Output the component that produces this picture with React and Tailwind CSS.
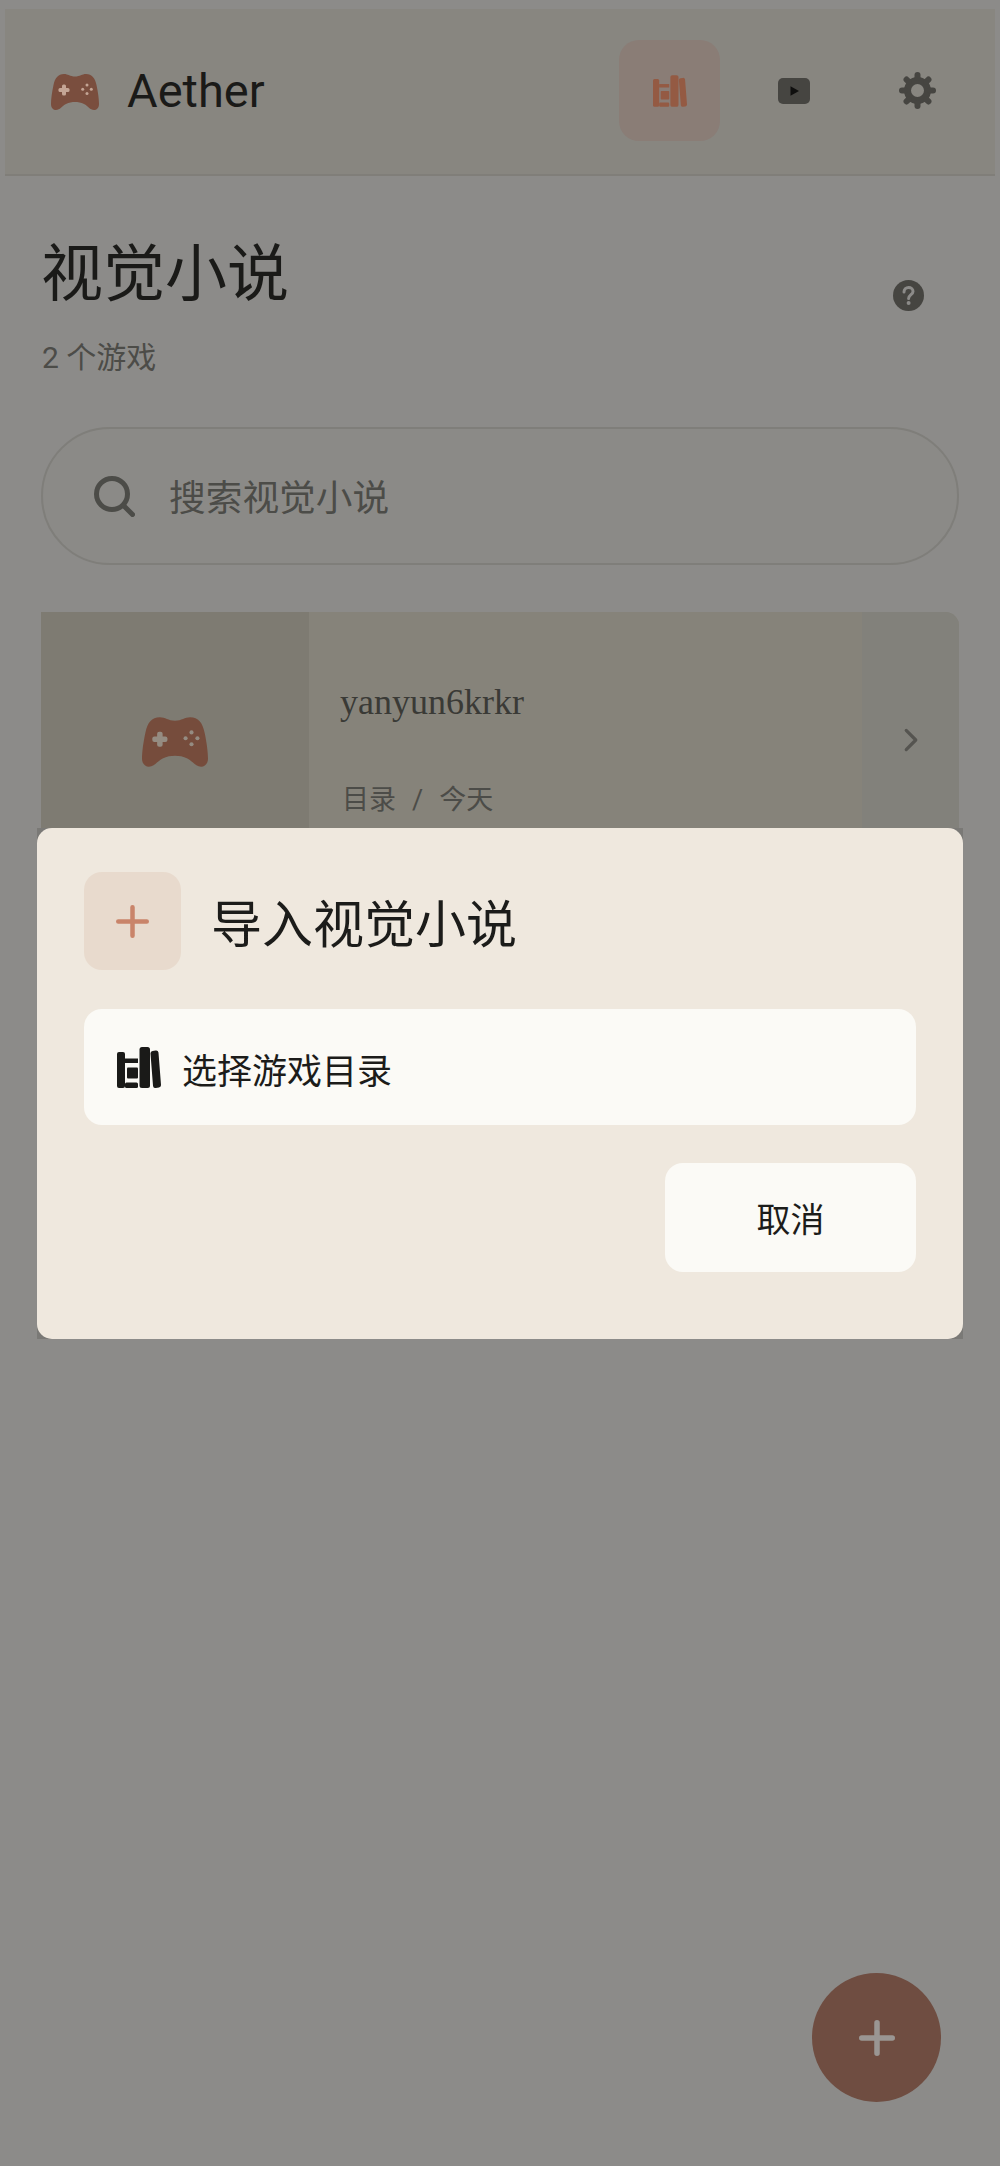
import React from "react";
import { IoChevronForward } from "react-icons/io5";

const sans = "font-['Roboto','Noto_Sans_CJK_SC',sans-serif]";

function Pad({ w, h, className, dot }) {
  return (
    <svg width={w} height={h} viewBox="0 0 48 36" className={className}>
      <path
        fill="currentColor"
        d="M13 0C17 0 19 2.5 24 2.5C29 2.5 31 0 35 0C41 0 44 4 45.5 11C47 18 48 25 48 30C48 34 45.5 36 43 36C39 36 37 32 33 30C30 28.5 27 28 24 28C21 28 18 28.5 15 30C11 32 9 36 5 36C2.5 36 0 34 0 30C0 25 1 18 2.5 11C4 4 7 0 13 0Z"
      />
      <g fill={dot}>
        <rect x="7.5" y="14" width="11" height="4" rx="1.5" />
        <rect x="11" y="10.5" width="4" height="11" rx="1.5" />
        <circle cx="36" cy="11" r="1.5" />
        <circle cx="36" cy="19.6" r="1.5" />
        <circle cx="31.7" cy="15.3" r="1.5" />
        <circle cx="40.3" cy="15.3" r="1.5" />
      </g>
    </svg>
  );
}

function Plus({ size, stroke, className }) {
  const m = size / 2;
  const e = stroke / 2;
  return (
    <svg width={size} height={size} viewBox={`0 0 ${size} ${size}`} className={className}>
      <path d={`M${m} ${e}V${size - e}M${e} ${m}H${size - e}`} stroke="currentColor" strokeWidth={stroke} strokeLinecap="round" fill="none" />
    </svg>
  );
}

function Gear({ className }) {
  const angles = [0, 45, 90, 135, 180, 225, 270, 315];
  return (
    <svg width="37" height="37" viewBox="0 0 37 37" className={className}>
      <circle cx="18.5" cy="18.5" r="10" fill="none" stroke="currentColor" strokeWidth="7" />
      {angles.map((a) => (
        <line key={a} x1="18.5" y1="6" x2="18.5" y2="3" stroke="currentColor" strokeWidth="6" strokeLinecap="round" transform={`rotate(${a} 18.5 18.5)`} />
      ))}
    </svg>
  );
}

function Play() {
  return (
    <svg width="32" height="26" viewBox="0 0 32 26">
      <rect width="32" height="26" rx="5" fill="#464541" />
      <path d="M12.5 8.2L21 13L12.5 17.8Z" fill="#0f0f0e" />
    </svg>
  );
}

function Search() {
  return (
    <svg width="41" height="41" viewBox="0 0 41 41" className="text-[#4c4c48]">
      <circle cx="18" cy="18" r="15.5" fill="none" stroke="currentColor" strokeWidth="5" />
      <path d="M30 30L38.5 38.5" stroke="currentColor" strokeWidth="5" strokeLinecap="round" />
    </svg>
  );
}

function Help() {
  return (
    <svg width="31" height="31" viewBox="0 0 31 31">
      <circle cx="15.5" cy="15.5" r="15.5" fill="#464541" />
      <path d="M11 12C11 9 13.2 7.5 15.6 7.5C18 7.5 20 9 20 11.4C20 14.5 15.6 14.8 15.6 18.5" fill="none" stroke="#8c8b89" strokeWidth="3" strokeLinecap="round" />
      <circle cx="15.6" cy="23" r="2" fill="#8c8b89" />
    </svg>
  );
}

function Books({ w, h, className }) {
  return (
    <svg width={w} height={h} viewBox="0 0 44 41" className={className} fill="currentColor">
      <rect x="0" y="5" width="8" height="36" rx="2" />
      <rect x="8" y="11.5" width="13" height="4.5" />
      <rect x="10" y="20.5" width="11" height="11" rx="1" />
      <rect x="8" y="35.5" width="13" height="5.5" rx="1.5" />
      <rect x="22.5" y="0" width="10.5" height="41" rx="2.5" />
      <path d="M36 6.5L39 6L41.5 38L38.5 38.5Z" stroke="currentColor" strokeWidth="5" strokeLinejoin="round" />
    </svg>
  );
}

export default function App() {
  return (
    <div className={`relative h-[2166px] w-full overflow-hidden bg-[#8c8b89] ${sans}`}>
      <div className="px-[5px] pt-[9px]">
        <header className="flex h-[167px] items-center justify-between border-b-2 border-[#807e79] bg-[#888680] pb-[2px] pl-[46px] pr-[27px]">
          <div className="flex items-center gap-[28px]">
            <Pad w={48} h={36} className="mt-[3px] text-[#7a4e3e]" dot="#c4a595" />
            <span className="text-[47px] leading-none text-[#1a1a18]">Aether</span>
          </div>
          <nav className="flex items-center gap-[23px]">
            <div className="flex h-[101px] w-[101px] items-center justify-center rounded-[20px] bg-[#8a7d76]">
              <Books w={34} h={32} className="text-[#945a43]" />
            </div>
            <div className="flex h-[101px] w-[101px] items-center justify-center">
              <Play />
            </div>
            <div className="flex h-[101px] w-[101px] items-center justify-center">
              <Gear className="text-[#464541]" />
            </div>
          </nav>
        </header>
      </div>

      <main className="px-[41px]">
        <div className="mt-[58px] flex items-start justify-between">
          <div>
            <h1 className="font-['Liberation_Serif','Noto_Sans_CJK_SC',serif] text-[62px] font-normal leading-[82px] text-[#1a1a18]">视觉小说</h1>
            <p className="mt-[22px] pl-[1px] text-[30px] leading-[40px] text-[#4c4c48]">2 个游戏</p>
          </div>
          <div className="mr-[35px] mt-[46px]">
            <Help />
          </div>
        </div>

        <div className="mt-[49px] flex h-[138px] items-center rounded-full border-2 border-[#7f7e7a] bg-[#8b8a87] pl-[51px]">
          <Search />
          <span className="ml-[34px] mt-[7px] text-[36.7px] leading-none text-[#4c4c48]">搜索视觉小说</span>
        </div>

        <section className="mt-[47px] flex h-[256px] overflow-hidden rounded-tr-[14px] bg-[#86837a]">
          <div className="flex w-[268px] items-center justify-center bg-[#7e7b72]">
            <Pad w={66} h={50} className="mt-[3px] text-[#764c3c]" dot="#958c82" />
          </div>
          <div className="flex-1 pl-[31px] pt-[66px]">
            <div className="font-['Liberation_Serif',serif] text-[36px] leading-[48px] text-[#3a3a36]">yanyun6krkr</div>
            <div className="mt-[56px] flex items-center gap-[16px] pl-[2px] text-[27px] leading-[36px] text-[#4c4c48]">
              <span>目录</span>
              <span>/</span>
              <span>今天</span>
            </div>
          </div>
          <div className="flex w-[97px] items-center justify-center bg-[#82817b]">
            <IoChevronForward size={34} className="text-[#555450]" />
          </div>
        </section>
      </main>

      <button className="absolute left-[812px] top-[1973px] flex h-[129px] w-[129px] items-center justify-center rounded-full bg-[#6f4d41]">
        <Plus size={36} stroke={5.5} className="text-[#9a9693]" />
      </button>

      <div className="absolute inset-0 flex items-center justify-center pt-[1px]">
        <div className="h-[511px] w-[926px] bg-[#7a7976]">
          <div className="h-full rounded-[15px] bg-[#efe8de] px-[47px] pt-[44px]">
            <div className="flex items-center gap-[30px]">
              <div className="flex h-[98px] w-[97px] items-center justify-center rounded-[18px] bg-[#e8dacd]">
                <Plus size={33} stroke={4.5} className="text-[#c9846a]" />
              </div>
              <h2 className="pt-[8px] text-[51px] leading-none text-[#1c1c1a]">导入视觉小说</h2>
            </div>
            <div className="mt-[39px] flex h-[116px] items-center gap-[21px] rounded-[18px] bg-[#fbfaf6] pl-[33px]">
              <Books w={44} h={41} className="text-[#1a1a18]" />
              <span className="pt-[10px] text-[35px] leading-none text-[#1c1c1a]">选择游戏目录</span>
            </div>
            <div className="mt-[38px] flex justify-end">
              <button className="h-[109px] w-[251px] rounded-[18px] bg-[#fbfaf6] pt-[6px] text-[34px] text-[#1c1c1a]">取消</button>
            </div>
          </div>
        </div>
      </div>
    </div>
  );
}
